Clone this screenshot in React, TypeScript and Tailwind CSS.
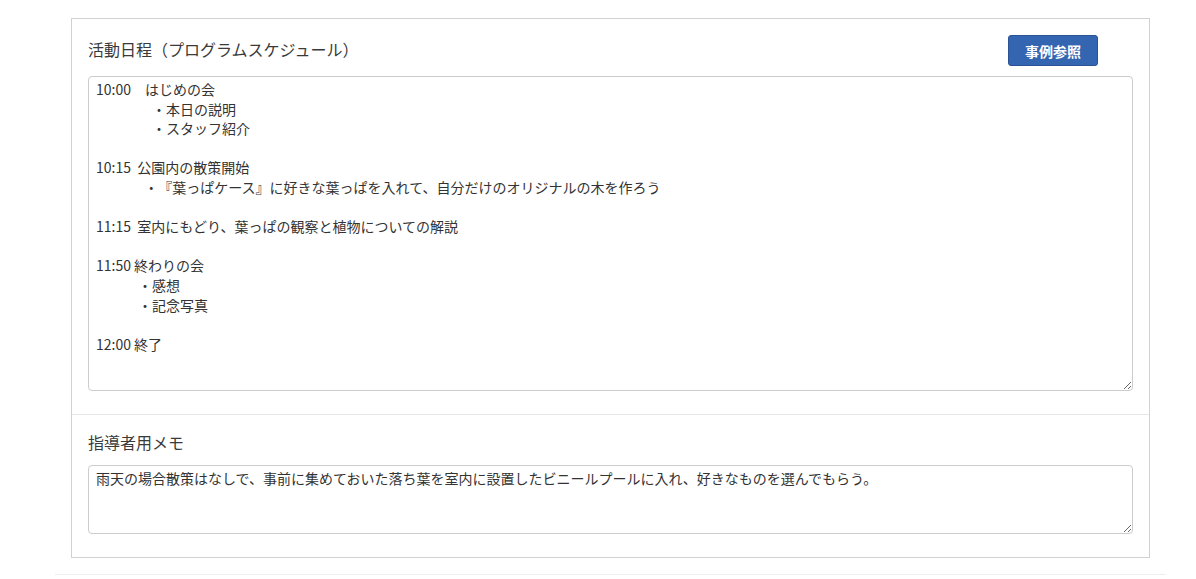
import { useState, type ChangeEvent } from "react";

const jpFont = "font-['Noto_Sans_CJK_JP','Noto_Sans',sans-serif]";

const scheduleText = [
  "10:00　はじめの会",
  "　　　　・本日の説明",
  "　　　　・スタッフ紹介",
  "",
  "10:15  公園内の散策開始",
  "　　　  ・『葉っぱケース』に好きな葉っぱを入れて、自分だけのオリジナルの木を作ろう",
  "",
  "11:15  室内にもどり、葉っぱの観察と植物についての解説",
  "",
  "11:50 終わりの会",
  "　　　・感想",
  "　　　・記念写真",
  "",
  "12:00 終了",
].join("\n");

const memoText =
  "雨天の場合散策はなしで、事前に集めておいた落ち葉を室内に設置したビニールプールに入れ、好きなものを選んでもらう。";

function App() {
  const [schedule, setSchedule] = useState<string>(scheduleText);
  const [memo, setMemo] = useState<string>(memoText);

  function atualizarSchedule(e: ChangeEvent<HTMLTextAreaElement>) {
    setSchedule(e.target.value);
  }

  function atualizarMemo(e: ChangeEvent<HTMLTextAreaElement>) {
    setMemo(e.target.value);
  }

  const textareaClass = `block w-full border border-[#cccccc] rounded-[4px] bg-white pt-[3px] pl-[7px] pr-2 text-[14px] leading-[1.4] text-[#333333] [text-spacing-trim:space-all] ${jpFont} focus:outline-none`;

  return (
    <main className={`min-h-screen bg-white pt-[18px] ${jpFont}`}>
      <div className="ml-[55px] w-[1111px] pb-4 border-b border-[#eeeeee]">
        <section className="mx-4 border border-[#d2d2d2] bg-white">
          {/* 活動日程 */}
          <div className="px-4 pt-4 pb-[23px]">
            <div className="flex items-start justify-between pr-[35px]">
              <h2 className="mt-[2px] text-[16px] leading-6 font-normal text-[#3a3a3a] [text-spacing-trim:space-all]">
                活動日程（プログラムスケジュール）
              </h2>
              <button
                type="button"
                className="h-[31px] px-[16px] rounded-[3px] border border-[#2a5295] bg-[#3465b1] text-[14px] font-bold text-white leading-5"
              >
                事例参照
              </button>
            </div>
            <textarea
              value={schedule}
              onChange={atualizarSchedule}
              className={`mt-[10px] h-[315px] ${textareaClass}`}
            />
          </div>

          {/* 指導者用メモ */}
          <div className="border-t border-[#e6e6e6] px-4 pt-[15px] pb-[23px]">
            <h2 className="text-[16px] leading-6 font-normal text-[#3a3a3a]">
              指導者用メモ
            </h2>
            <textarea
              value={memo}
              onChange={atualizarMemo}
              className={`mt-[11px] h-[69px] ${textareaClass}`}
            />
          </div>
        </section>
      </div>
    </main>
  );
}

export default App;
